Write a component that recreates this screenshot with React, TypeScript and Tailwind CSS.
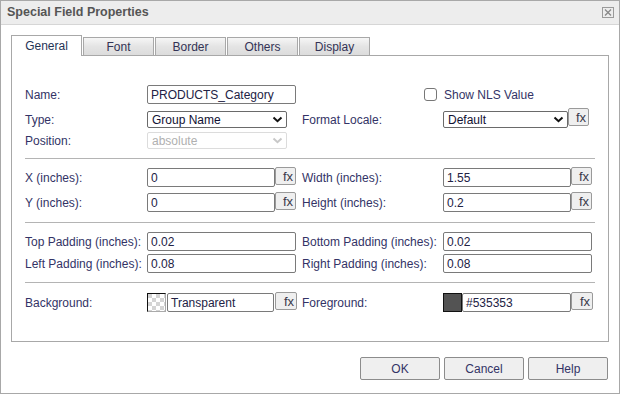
import React from 'react';

const Chevron = ({ color = '#111' }: { color?: string }) => (
  <svg width="11" height="7" viewBox="0 0 11 7" className="shrink-0">
    <path d="M1.5 1.5 L5.5 5.2 L9.5 1.5" fill="none" stroke={color} strokeWidth="2" />
  </svg>
);

function TextBox({ value, w }: { value: string; w: string }) {
  return (
    <div className={`${w} h-[19px] border border-[#7a7a7a] rounded-[2px] bg-white px-[3px] flex items-center text-[#222244] overflow-hidden whitespace-nowrap`}>
      {value}
    </div>
  );
}

function SelectBox({ value, w, disabled }: { value: string; w: string; disabled?: boolean }) {
  return (
    <div
      className={`${w} h-[17px] rounded-[2px] bg-white pl-[4px] pr-[3px] flex items-center justify-between border ${
        disabled ? 'border-[#dcdcdc] text-[#b0b0b0]' : 'border-[#6a6a6a] text-[#111133]'
      }`}
    >
      <span>{value}</span>
      <Chevron color={disabled ? '#c8c8c8' : '#111'} />
    </div>
  );
}

function Fx({ extra = '' }: { extra?: string }) {
  return (
    <div className={`w-[21px] h-[18px] border border-[#9a9a9a] rounded-[2px] bg-[#efefef] flex items-center justify-end pr-[2px] text-[13px] leading-none text-[#3a3a4a] ${extra}`}>
      fx
    </div>
  );
}

function Sep() {
  return <div className="h-px bg-[#b4b4b4] mr-[13px]" />;
}

function Row({ children, className = '' }: { children: React.ReactNode; className?: string }) {
  return <div className={`flex items-center ${className}`}>{children}</div>;
}

const LabelL = ({ children }: { children: React.ReactNode }) => (
  <div className="w-[122px] shrink-0 text-[#333366] whitespace-nowrap">{children}</div>
);
const LabelR = ({ children }: { children: React.ReactNode }) => (
  <div className="w-[141px] shrink-0 text-[#333366] whitespace-nowrap">{children}</div>
);

function Checker() {
  return (
    <div className="w-[19px] h-[19px] border-t border-l border-t-[#111] border-l-[#111] border-r border-b border-r-[#aaa] border-b-[#aaa] overflow-hidden">
      <svg width="18" height="18" viewBox="0 0 18 18">
        <rect width="18" height="18" fill="#fff" />
        {Array.from({ length: 5 }).map((_, r) =>
          Array.from({ length: 5 }).map((_, c) =>
            (r + c) % 2 === 0 ? <rect key={`${r}-${c}`} x={c * 4} y={r * 4} width="4" height="4" fill="#d4d4d4" /> : null
          )
        )}
      </svg>
    </div>
  );
}

const tabs = ['General', 'Font', 'Border', 'Others', 'Display'];

export default function App() {
  return (
    <div className="w-[620px] h-[394px] border border-[#a8a8a8] bg-white flex flex-col font-['Liberation_Sans',Arial,sans-serif] text-[12px]">
      {/* Title bar */}
      <div className="h-[24px] shrink-0 bg-[#ededed] border-b border-[#d6d6d6] pl-[6px] pr-[5px] flex items-center justify-between">
        <span className="font-bold text-[12.5px] text-[#555555]">Special Field Properties</span>
        <div className="w-[12px] h-[11px] border border-[#9a9a9a] flex items-center justify-center">
          <svg width="8" height="7" viewBox="0 0 8 7">
            <path d="M1 0.5 L7 6.5 M7 0.5 L1 6.5" stroke="#888" strokeWidth="1.3" />
          </svg>
        </div>
      </div>

      <div className="pt-[10px] pl-[10px] pr-[10px] flex flex-col">
        {/* Tabs */}
        <div className="flex items-end gap-px h-[20px]">
          {tabs.map((t, i) =>
            i === 0 ? (
              <div key={t} className="relative z-10 w-[71px] h-[21px] -mb-px bg-white border-t border-l border-r border-[#a8a8a8] flex items-center justify-center text-[#1f3355]">
                {t}
              </div>
            ) : (
              <div key={t} className="w-[71px] h-[18px] bg-linear-to-b from-[#f6f6f6] via-[#e4e4e4] to-[#dcdcdc] border-t border-l border-r border-[#a8a8a8] flex items-center justify-center text-[#333355]">
                {t}
              </div>
            )
          )}
        </div>

        {/* Panel */}
        <div className="h-[287px] border border-[#a8a8a8] pl-[13px] pt-[29px] flex flex-col">
          <Row className="h-[19px]">
            <LabelL>Name:</LabelL>
            <div className="w-[155px] shrink-0">
              <TextBox value="PRODUCTS_Category" w="w-[149px]" />
            </div>
            <div className="w-[122px]" />
            <div className="flex items-center gap-[7px] text-[#333366]">
              <div className="w-[13px] h-[13px] border border-[#777] rounded-[3px] bg-white" />
              <span>Show NLS Value</span>
            </div>
          </Row>

          <Row className="h-[17px] mt-[7px]">
            <LabelL>Type:</LabelL>
            <div className="w-[155px] shrink-0">
              <SelectBox value="Group Name" w="w-[140px]" />
            </div>
            <LabelR>Format Locale:</LabelR>
            <div className="flex items-start">
              <SelectBox value="Default" w="w-[125px]" />
              <Fx extra="h-[17px] -mt-[3px]" />
            </div>
          </Row>

          <Row className="h-[17px] mt-[4px]">
            <LabelL>Position:</LabelL>
            <div className="w-[155px] shrink-0">
              <SelectBox value="absolute" w="w-[140px]" disabled />
            </div>
          </Row>

          <div className="mt-[9px]">
            <Sep />
          </div>

          <Row className="h-[19px] mt-[9px]">
            <LabelL>X (inches):</LabelL>
            <div className="w-[155px] shrink-0 flex items-start">
              <TextBox value="0" w="w-[128px]" />
              <Fx extra="-mt-px" />
            </div>
            <LabelR>Width (inches):</LabelR>
            <div className="flex items-start">
              <TextBox value="1.55" w="w-[128px]" />
              <Fx extra="-mt-px" />
            </div>
          </Row>

          <Row className="h-[19px] mt-[6px]">
            <LabelL>Y (inches):</LabelL>
            <div className="w-[155px] shrink-0 flex items-start">
              <TextBox value="0" w="w-[128px]" />
              <Fx extra="-mt-px" />
            </div>
            <LabelR>Height (inches):</LabelR>
            <div className="flex items-start">
              <TextBox value="0.2" w="w-[128px]" />
              <Fx extra="-mt-px" />
            </div>
          </Row>

          <div className="mt-[10px]">
            <Sep />
          </div>

          <Row className="h-[19px] mt-[9px]">
            <LabelL>Top Padding (inches):</LabelL>
            <div className="w-[155px] shrink-0">
              <TextBox value="0.02" w="w-[149px]" />
            </div>
            <LabelR>Bottom Padding (inches):</LabelR>
            <TextBox value="0.02" w="w-[149px]" />
          </Row>

          <Row className="h-[19px] mt-[3px]">
            <LabelL>Left Padding (inches):</LabelL>
            <div className="w-[155px] shrink-0">
              <TextBox value="0.08" w="w-[149px]" />
            </div>
            <LabelR>Right Padding (inches):</LabelR>
            <TextBox value="0.08" w="w-[149px]" />
          </Row>

          <div className="mt-[9px]">
            <Sep />
          </div>

          <Row className="h-[19px] mt-[10px]">
            <LabelL>Background:</LabelL>
            <div className="w-[155px] shrink-0 flex items-start">
              <Checker />
              <div className="ml-px">
                <TextBox value="Transparent" w="w-[107px]" />
              </div>
              <Fx extra="-mt-px ml-px w-[22px]" />
            </div>
            <LabelR>Foreground:</LabelR>
            <div className="flex items-start">
              <div className="w-[19px] h-[19px] border border-[#111] bg-[#535353]" />
              <TextBox value="#535353" w="w-[109px]" />
              <Fx extra="-mt-px w-[22px]" />
            </div>
          </Row>
        </div>

        {/* Buttons */}
        <div className="mt-[15px] flex justify-end gap-[4px] pr-px">
          {['OK', 'Cancel', 'Help'].map((b) => (
            <div key={b} className="w-[80px] h-[23px] border border-[#8c8c8c] rounded-[2px] bg-[#efefef] flex items-center justify-center text-[#333366]">
              {b}
            </div>
          ))}
        </div>
      </div>
    </div>
  );
}
